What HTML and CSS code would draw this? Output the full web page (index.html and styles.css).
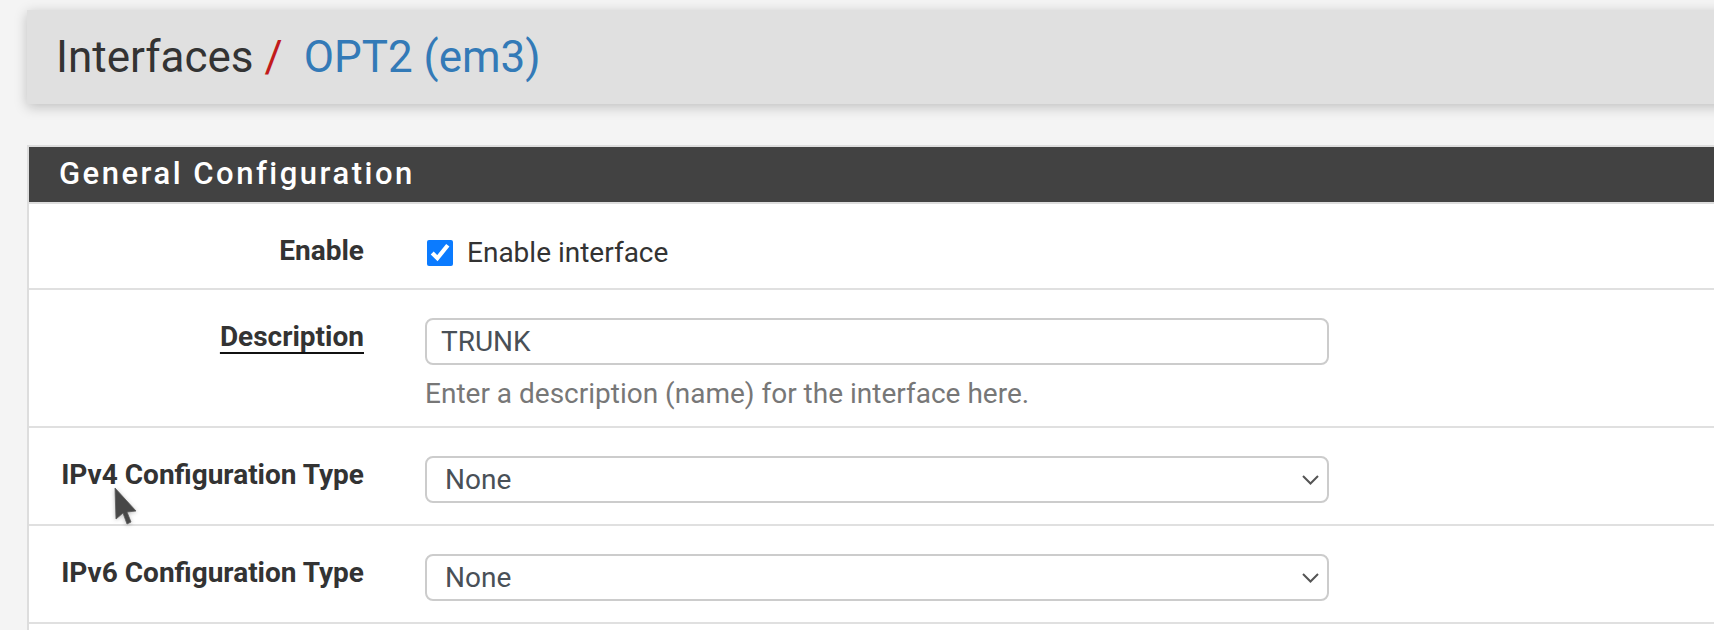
FILE: index.html
```html
<!DOCTYPE html>
<html lang="en">
<head>
<meta charset="utf-8">
<title>Interfaces / OPT2 (em3)</title>
<link rel="stylesheet" href="styles.css">
</head>
<body>
<div class="page">
  <div class="breadcrumb-bar">
    <h1 class="crumbs"><span class="crumb">Interfaces</span><span class="sep">/</span><a class="crumb-link" href="#">OPT2 (em3)</a></h1>
  </div>

  <div class="panel">
    <div class="panel-heading">
      <h2 class="panel-title">General Configuration</h2>
    </div>
    <div class="panel-body">
      <div class="form-row row-enable">
        <div class="form-label">Enable</div>
        <div class="form-control-wrap">
          <label class="check"><input class="checkbox" type="checkbox" checked><span>Enable interface</span></label>
        </div>
      </div>

      <div class="form-row row-desc">
        <div class="form-label"><span class="required">Description</span></div>
        <div class="form-control-wrap">
          <input class="text-input" type="text" value="TRUNK">
          <div class="help">Enter a description (name) for the interface here.</div>
        </div>
      </div>

      <div class="form-row">
        <div class="form-label">IPv4 Configuration Type</div>
        <div class="form-control-wrap">
          <select class="select"><option>None</option></select>
        </div>
      </div>

      <div class="form-row">
        <div class="form-label">IPv6 Configuration Type</div>
        <div class="form-control-wrap">
          <select class="select"><option>None</option></select>
        </div>
      </div>
    </div>
  </div>

  <svg class="cursor" width="26" height="42" viewBox="0 0 26 42" aria-hidden="true">
    <polygon points="1,1 2,32 9,26 13,37 17,35 13,25 22,24" fill="#474747" stroke="#5a5a5a" stroke-width="0.8" stroke-linejoin="round"/>
  </svg>
</div>
</body>
</html>
```

FILE: styles.css
```css
html, body {
  margin: 0;
  padding: 0;
  overflow: hidden;
  background: #f4f4f4;
}

body {
  font-family: Roboto, "Liberation Sans", sans-serif;
  font-size: 28px;
  color: #333333;
}

.page {
  position: relative;
  padding: 10px 0 0 27px;
  margin-right: -40px;
}

/* breadcrumb */
.breadcrumb-bar {
  background: #e0e0e0;
  height: 94px;
  box-shadow: 0 3px 12px rgba(0, 0, 0, 0.22);
}

.crumbs {
  margin: 0;
  padding: 1px 0 0 29px;
  font-size: 44px;
  font-weight: 400;
  line-height: 93px;
  white-space: nowrap;
  color: #333333;
}

.sep {
  display: inline-block;
  margin: 0 21px 0 11px;
  color: #c21b1b;
}

.crumb-link {
  color: #337ab7;
  text-decoration: none;
}

/* panel */
.panel {
  margin-top: 41px;
  border: 2px solid #dddddd;
  border-right: none;
  border-bottom: none;
  background: #ffffff;
}

.panel-heading {
  background: #424242;
  height: 55px;
  border-bottom: 2px solid #dddddd;
}

.panel-title {
  margin: 0;
  padding: 0 0 2px 30px;
  font-size: 31px;
  font-weight: 500;
  letter-spacing: 2.5px;
  line-height: 53px;
  color: #ffffff;
}

.panel-body {
  padding-bottom: 6px;
}

.form-row {
  display: flex;
  align-items: flex-start;
  gap: 61px;
  padding: 28px 0 21px;
  border-bottom: 2px solid #e0e0e0;
}

.row-enable {
  padding-bottom: 16px;
}

.row-desc {
  padding-bottom: 12px;
}

.form-label {
  flex: 0 0 335px;
  text-align: right;
  font-weight: 700;
  line-height: 40px;
  margin-top: -1px;
  color: #333333;
  white-space: nowrap;
}

.required {
  text-decoration: underline;
  text-decoration-thickness: 2px;
  text-underline-offset: 6px;
  text-decoration-color: #111111;
  text-decoration-skip-ink: none;
}

.form-control-wrap {
  flex: 0 0 904px;
}

.check {
  display: flex;
  align-items: center;
  height: 40px;
  color: #333333;
}

.checkbox {
  width: 26px;
  height: 26px;
  margin: 2px 14px 0 2px;
  accent-color: #0b7bff;
}

.text-input,
.select {
  display: block;
  box-sizing: border-box;
  width: 904px;
  height: 47px;
  margin: 0;
  padding: 0 14px;
  border: 2px solid #cccccc;
  border-radius: 8px;
  background-color: #ffffff;
  font-family: Roboto, "Liberation Sans", sans-serif;
  font-size: 28px;
  color: #495057;
  outline: none;
}

.select {
  -webkit-appearance: none;
  appearance: none;
  padding: 0 40px 0 18px;
  background-image: url("data:image/svg+xml;utf8,<svg xmlns='http://www.w3.org/2000/svg' width='17' height='10' viewBox='0 0 17 10'><path d='M1 1 L8.5 8.5 L16 1' fill='none' stroke='%23555555' stroke-width='2'/></svg>");
  background-repeat: no-repeat;
  background-position: right 8px center;
  background-size: 17px 10px;
}

.help {
  margin-top: 9px;
  line-height: 40px;
  color: #777777;
}

/* mouse pointer captured in the screenshot */
.cursor {
  position: absolute;
  left: 114px;
  top: 487px;
  filter: drop-shadow(0 1px 2px rgba(0, 0, 0, 0.25));
}
```
